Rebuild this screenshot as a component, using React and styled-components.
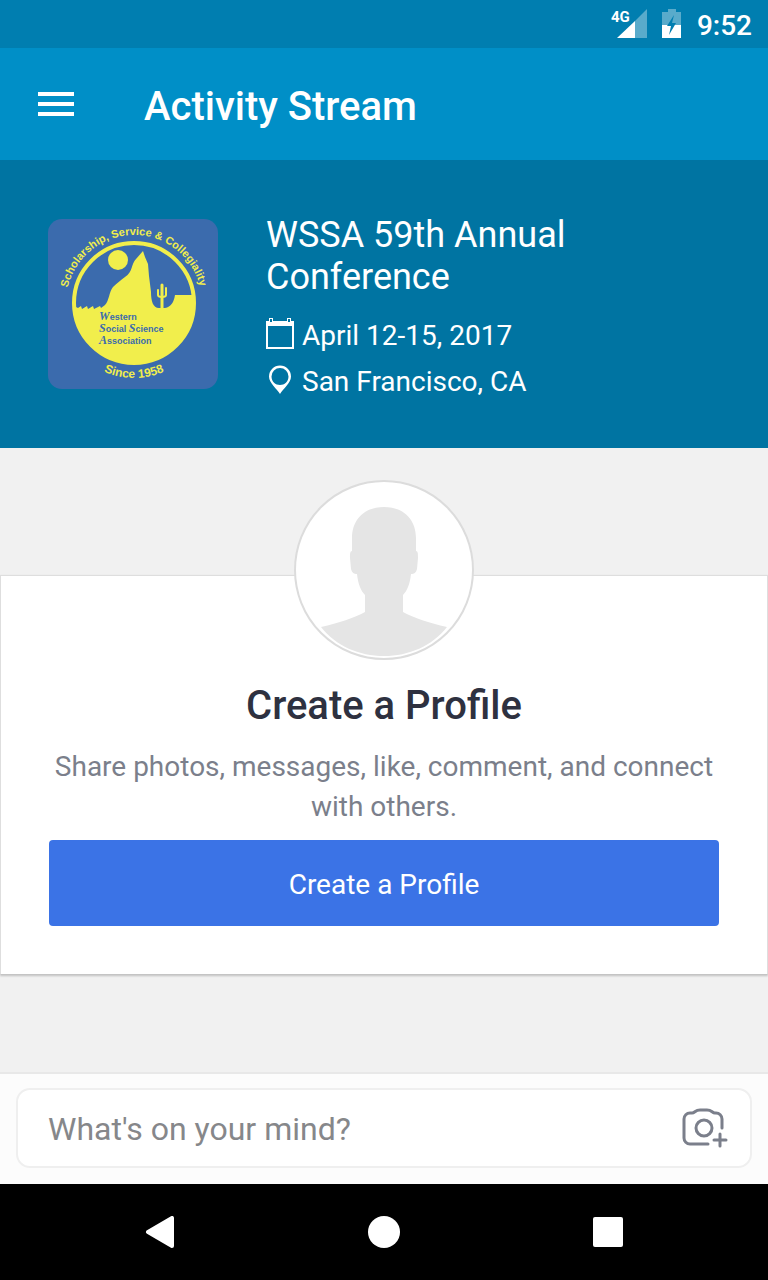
import React from 'react';
import styled, { createGlobalStyle } from 'styled-components';

const colors = {
  status: '#007eb0',
  toolbar: '#008fc7',
  event: '#0074a2',
  page: '#f1f1f1',
  action: '#3b73e6',
  heading: '#2e3140',
  muted: '#7b7f8b',
  logoBlue: '#3b6bad',
  logoYellow: '#f1ee4c',
};

const SignalIcon = () => (
  <svg width="36" height="30" viewBox="0 0 36 30" aria-hidden="true">
    <path d="M36 0V29H24V12Z" fill="#fff" fillOpacity="0.35" />
    <path d="M24 12V29H6Z" fill="#fff" />
    <text x="0" y="13" fontFamily="Roboto, sans-serif" fontSize="15" fontWeight="700" fill="#fff">4G</text>
  </svg>
);

const BatteryIcon = () => (
  <svg width="20" height="30" viewBox="0 0 20 30" aria-hidden="true">
    <path d="M6 0h8v3h5v13H0V3h6z" fill="#fff" fillOpacity="0.35" />
    <path d="M0 16h19v13H0z" fill="#fff" />
    <path d="M12 6L5 17h4l-2 9 7-12h-4z" fill={colors.status} />
  </svg>
);

const CalendarIcon = () => (
  <svg width="28" height="32" viewBox="0 0 28 32" aria-hidden="true">
    <path fillRule="evenodd" d="M0 3h28v28H0zM2 8v21h24V8z" fill="#fff" />
    <path d="M3 0h4v5H3zM21 0h4v5h-4z" fill="#fff" />
    <path d="M4 1h2v3H4zM22 1h2v3h-2z" fill={colors.event} />
  </svg>
);

const PinIcon = () => (
  <svg width="28" height="32" viewBox="0 0 28 32" aria-hidden="true">
    <path
      fillRule="evenodd"
      d="M14 30C11 25 3 19 3 12.500a11 11 0 0 1 22 0C25 19 17 25 14 30zM14 4a8.500 8.500 0 0 0-8.500 8.500c0 5 4 8.500 8.500 8.500s8.500-3.500 8.500-8.500A8.500 8.500 0 0 0 14 4z"
      fill="#fff"
    />
  </svg>
);

const CameraPlusIcon = () => (
  <svg width="48" height="44" viewBox="0 0 48 44" fill="none" stroke={colors.muted} strokeWidth="3" strokeLinecap="round" aria-hidden="true">
    <path d="M28 38H10a6 6 0 0 1-6-6V13a6 6 0 0 1 6-6h2c3 0 3-3 8-3h7c5 0 5 3 8 3h1a6 6 0 0 1 6 6v9" />
    <circle cx="24" cy="22" r="8" />
    <path d="M34 34h12M40 28v12" />
  </svg>
);

const Silhouette = () => (
  <svg width="176" height="176" viewBox="0 0 176 176" aria-hidden="true">
    <path
      fill="#e5e5e5"
      d="M88 25c-19 0-32 12-32 31v13c-2 0-2 3-2 7l1 11c1 4 3 5 6 5 1 10 4 17 8 21v17c-11 6-26 11-44 15 15 19 38 29 63 29s48-10 63-29c-18-4-33-9-44-15v-17c4-4 7-11 8-21 3 0 5-1 6-5l1-11c0-4 0-7-2-7V56c0-19-13-31-32-31z"
    />
  </svg>
);

const WssaLogo = () => (
  <svg width="170" height="170" viewBox="0 0 170 170" role="img" aria-label="WSSA">
    <defs>
      <path id="motto" d="M18 84a68 68 0 0 1 136 0a68 68 0 0 1-3 19" />
      <path id="since" d="M11 84a75 75 0 0 0 150 0" />
      <clipPath id="disc"><circle cx="86" cy="84" r="61" /></clipPath>
    </defs>
    <rect width="170" height="170" rx="14" fill={colors.logoBlue} />
    <circle cx="86" cy="84" r="60" fill="none" stroke={colors.logoYellow} strokeWidth="4" />
    <circle cx="70" cy="41" r="10" fill={colors.logoYellow} />
    <path
      clipPath="url(#disc)"
      fill={colors.logoYellow}
      d="M24 86l6 3 3-2 1 3 5-3 1 3 5-3 1 3 6-3 1 2 4-3c4-4 4-13 8-18 4-4 8-7 12-10 8-5 6-13 11-18l7-8 2 6 3 7 1 12 2 16c0 9 2 16 8 16h6c6-1 9-6 10-13h24v76H20z"
    />
    <path d="M114 66v24" stroke={colors.logoYellow} strokeWidth="3" strokeLinecap="round" />
    <path d="M110 71v5q0 2 4 2M118 69v7q0 2-4 2" fill="none" stroke={colors.logoYellow} strokeWidth="2" strokeLinecap="round" />
    <LogoArc fontSize="11">
      <textPath href="#motto" startOffset="106" textAnchor="middle">Scholarship, Service &amp; Collegiality</textPath>
    </LogoArc>
    <LogoArc fontSize="12">
      <textPath href="#since" startOffset="50%" textAnchor="middle">Since 1958</textPath>
    </LogoArc>
    <LogoWords x="51" y="101"><LogoCap>W</LogoCap>estern</LogoWords>
    <LogoWords x="51" y="113"><LogoCap>S</LogoCap>ocial <LogoCap>S</LogoCap>cience</LogoWords>
    <LogoWords x="51" y="125"><LogoCap>A</LogoCap>ssociation</LogoWords>
  </svg>
);

const App = () => (
  <Screen>
    <GlobalStyle />
    <StatusBar>
      <SignalIcon />
      <BatteryIcon />
      <Clock>9:52</Clock>
    </StatusBar>

    <Toolbar>
      <MenuButton aria-label="Menu">
        <MenuLine />
        <MenuLine />
        <MenuLine />
      </MenuButton>
      <ToolbarTitle>Activity Stream</ToolbarTitle>
    </Toolbar>

    <EventHeader>
      <WssaLogo />
      <EventInfo>
        <EventTitle>WSSA 59th Annual Conference</EventTitle>
        <EventDetail><CalendarIcon />April 12-15, 2017</EventDetail>
        <EventDetail><PinIcon />San Francisco, CA</EventDetail>
      </EventInfo>
    </EventHeader>

    <Stream>
      <ProfileCard>
        <Avatar><Silhouette /></Avatar>
        <CardTitle>Create a Profile</CardTitle>
        <CardText>Share photos, messages, like, comment, and connect with others.</CardText>
        <ActionButton>Create a Profile</ActionButton>
      </ProfileCard>
    </Stream>

    <Composer>
      <ComposerBox>
        <ComposerInput type="text" aria-label="What's on your mind?" placeholder="What's on your mind?" />
        <IconButton aria-label="Add photo"><CameraPlusIcon /></IconButton>
      </ComposerBox>
    </Composer>

    <NavBar>
      <IconButton aria-label="Back">
        <svg width="32" height="32" viewBox="0 0 32 32">
          <path d="M4 16L28 2v28z" fill="#fff" stroke="#fff" strokeWidth="4" strokeLinejoin="round" />
        </svg>
      </IconButton>
      <IconButton aria-label="Home">
        <svg width="32" height="32" viewBox="0 0 32 32"><circle cx="16" cy="16" r="16" fill="#fff" /></svg>
      </IconButton>
      <IconButton aria-label="Recent apps">
        <svg width="32" height="32" viewBox="0 0 32 32"><rect x="1" y="1" width="30" height="30" rx="2" fill="#fff" /></svg>
      </IconButton>
    </NavBar>
  </Screen>
);

export default App;

const GlobalStyle = createGlobalStyle`
  * {
    box-sizing: border-box;
  }
  body {
    margin: 0;
    font-family: Roboto, sans-serif;
  }
  svg {
    display: block;
    flex: none;
  }
`

const Screen = styled.div`
  min-height: 100vh;
  display: flex;
  flex-direction: column;
  background: ${colors.page};
`

const StatusBar = styled.div`
  height: 48px;
  padding: 0 16px;
  display: flex;
  align-items: center;
  justify-content: flex-end;
  gap: 15px;
  background: ${colors.status};
`

const Clock = styled.span`
  padding-top: 4px;
  font-size: 28px;
  font-weight: 500;
  line-height: 32px;
  color: #fff;
`

const Toolbar = styled.header`
  height: 112px;
  padding: 0 38px;
  display: flex;
  align-items: center;
  gap: 70px;
  background: ${colors.toolbar};
`

const MenuButton = styled.button`
  width: 36px;
  padding: 0;
  border: 0;
  background: none;
  display: flex;
  flex-direction: column;
  gap: 6px;
`

const MenuLine = styled.span`
  height: 4px;
  background: #fff;
`

const ToolbarTitle = styled.h1`
  margin: 0;
  padding-top: 6px;
  font-size: 40px;
  font-weight: 500;
  line-height: 48px;
  color: #fff;
`

const EventHeader = styled.section`
  padding: 43px 48px;
  display: flex;
  align-items: center;
  gap: 48px;
  background: ${colors.event};
  color: #fff;
`

const EventInfo = styled.div`
  flex: 1;
  padding-top: 11px;
`

const EventTitle = styled.h2`
  max-width: 400px;
  margin: 0 0 15px;
  font-size: 36px;
  font-weight: 400;
  line-height: 42px;
`

const EventDetail = styled.div`
  display: flex;
  gap: 8px;
  font-size: 28px;
  line-height: 46px;
  svg {
    margin-top: 5px;
  }
`

const LogoArc = styled.text`
  font-family: "Liberation Sans", Arial, sans-serif;
  font-weight: 700;
  fill: ${colors.logoYellow};
`

const LogoWords = styled.text`
  font-family: "Liberation Sans", Arial, sans-serif;
  font-size: 9px;
  font-weight: 700;
  fill: ${colors.logoBlue};
`

const LogoCap = styled.tspan`
  font-family: "Liberation Serif", "Times New Roman", serif;
  font-size: 12px;
  font-style: italic;
`

const Stream = styled.main`
  flex: 1;
  padding: 127px 0 48px;
`

const ProfileCard = styled.section`
  padding: 0 48px 48px;
  display: flex;
  flex-direction: column;
  align-items: center;
  background: #fff;
  border: 1px solid #dedede;
  border-bottom-color: #c4c4c4;
  box-shadow: 0 1px 2px rgba(0, 0, 0, 0.2);
  text-align: center;
`

const Avatar = styled.div`
  width: 180px;
  height: 180px;
  margin-top: -96px;
  border: 2px solid #dcdcdc;
  border-radius: 50%;
  background: #fff;
  overflow: hidden;
`

const CardTitle = styled.h2`
  margin: 22px 0 17px;
  font-size: 40px;
  font-weight: 500;
  line-height: 48px;
  color: ${colors.heading};
`

const CardText = styled.p`
  margin: 0 0 13px;
  font-size: 28px;
  line-height: 40px;
  color: ${colors.muted};
`

const ActionButton = styled.button`
  width: 100%;
  height: 86px;
  padding: 2px 0 0;
  border: 0;
  border-radius: 4px;
  background: ${colors.action};
  font-family: inherit;
  font-size: 28px;
  color: #fff;
`

const Composer = styled.footer`
  padding: 14px 16px 16px;
  border-top: 2px solid #e8e8e8;
  background: #fcfcfc;
`

const ComposerBox = styled.div`
  height: 80px;
  padding: 0 22px 0 30px;
  display: flex;
  align-items: center;
  border: 2px solid #efefef;
  border-radius: 14px;
  background: #fff;
`

const ComposerInput = styled.input`
  flex: 1;
  min-width: 0;
  padding: 2px 0 0;
  border: 0;
  outline: 0;
  background: none;
  font-family: inherit;
  font-size: 32px;
  line-height: 40px;
  &::placeholder {
    color: #86878a;
    opacity: 1;
  }
`

const IconButton = styled.button`
  padding: 0;
  border: 0;
  background: none;
`

const NavBar = styled.nav`
  height: 96px;
  padding: 0 48px;
  display: grid;
  grid-template-columns: repeat(3, 1fr);
  align-items: center;
  justify-items: center;
  background: #000;
`
